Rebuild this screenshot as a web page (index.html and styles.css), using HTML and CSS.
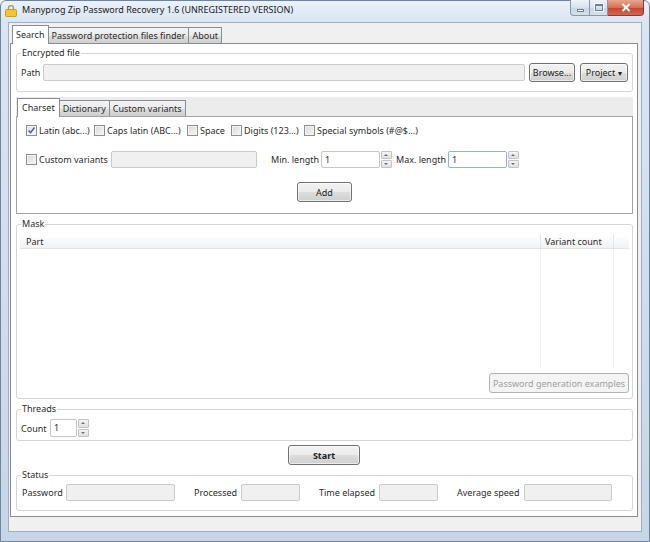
FILE: index.html
```html
<!DOCTYPE html>
<html>
<head>
<meta charset="utf-8">
<link rel="stylesheet" href="styles.css">
</head>
<body>
<div class="window">
  <div class="titlebar">
    <svg class="appicon" width="12" height="13" viewBox="0 0 12 13">
      <path d="M3.5 6V4.2a2.5 2.5 0 0 1 5 0V6" fill="none" stroke="#a89450" stroke-width="1.3"/>
      <rect x="0.5" y="5.5" width="11" height="7" rx="1" fill="#f1c534" stroke="#b98f1c" stroke-width="0.8"/>
    </svg>
    <span class="title">Manyprog Zip Password Recovery 1.6 (UNREGISTERED VERSION)</span>
    <div class="capbtns">
      <div class="capbtn cmin"><span class="minbar"></span></div>
      <div class="capbtn cmax"><span class="maxbox"></span></div>
      <div class="capbtn cclose">
        <svg width="10" height="9" viewBox="0 0 10 9"><path d="M1.5 1l7 7M8.5 1l-7 7" stroke="#fff" stroke-width="2"/></svg>
      </div>
    </div>
  </div>

  <div class="client">
    <div class="tabstrip">
      <div class="tab active">Search</div>
      <div class="tab">Password protection files finder</div>
      <div class="tab">About</div>
    </div>
    <div class="tabpanel">
      <div class="group g-file">
        <div class="gtitle">Encrypted file</div>
        <div class="row file-row">
          <span class="lbl">Path</span>
          <div class="field path"></div>
          <div class="btn browse">Browse...</div>
          <div class="btn project">Project <span class="caret">▾</span></div>
        </div>
      </div>

      <div class="subtabs">
        <div class="substrip">
          <div class="stab active">Charset</div>
          <div class="stab">Dictionary</div>
          <div class="stab">Custom variants</div>
        </div>
        <div class="subpanel">
          <div class="row cb-row">
            <div class="cbitem w-latin"><span class="cb checked"><svg width="9" height="9" viewBox="0 0 9 9"><path d="M1.5 4.5l2 2.2L7.5 1.5" fill="none" stroke="#4b5f95" stroke-width="1.5"/></svg></span>Latin (abc...)</div>
            <div class="cbitem w-caps"><span class="cb"></span>Caps latin (ABC...)</div>
            <div class="cbitem w-space"><span class="cb"></span>Space</div>
            <div class="cbitem w-digits"><span class="cb"></span>Digits (123...)</div>
            <div class="cbitem"><span class="cb"></span>Special symbols (#@$...)</div>
          </div>
          <div class="row cv-row">
            <div class="cbitem w-cv"><span class="cb"></span>Custom variants</div>
            <div class="field cvfield"></div>
            <span class="lbl minlbl">Min. length</span>
            <div class="spin"><span class="spinval">1</span><div class="spinbtns"><span class="sb up"></span><span class="sb dn"></span></div></div>
            <span class="lbl maxlbl">Max. length</span>
            <div class="spin focus"><span class="spinval">1</span><div class="spinbtns"><span class="sb up"></span><span class="sb dn"></span></div></div>
          </div>
          <div class="row add-row">
            <div class="btn add">Add</div>
          </div>
        </div>
      </div>

      <div class="group g-mask">
        <div class="gtitle">Mask</div>
        <div class="listview">
          <div class="lvhead">
            <div class="lvcol c-part">Part</div>
            <div class="lvcol c-count">Variant count</div>
            <div class="lvcol c-rest"></div>
          </div>
          <div class="lvbody">
            <div class="lvcell c-part"></div>
            <div class="lvcell c-count"></div>
            <div class="lvcell c-rest"></div>
          </div>
        </div>
        <div class="row ex-row">
          <div class="btn disabled">Password generation examples</div>
        </div>
      </div>

      <div class="group g-threads">
        <div class="gtitle">Threads</div>
        <div class="row th-row">
          <span class="lbl countlbl">Count</span>
          <div class="spin small"><span class="spinval">1</span><div class="spinbtns"><span class="sb up"></span><span class="sb dn"></span></div></div>
        </div>
      </div>

      <div class="row start-row">
        <div class="btn start">Start</div>
      </div>

      <div class="group g-status">
        <div class="gtitle">Status</div>
        <div class="row st-row">
          <span class="lbl l-pass">Password</span>
          <div class="field f-pass"></div>
          <span class="lbl l-proc">Processed</span>
          <div class="field f-proc"></div>
          <span class="lbl l-time">Time elapsed</span>
          <div class="field f-time"></div>
          <span class="lbl l-speed">Average speed</span>
          <div class="field f-speed"></div>
        </div>
      </div>
    </div>
  </div>
</div>
</body>
</html>
```

FILE: styles.css
```css
* { box-sizing: border-box; }
html, body { margin: 0; padding: 0; }
body {
  width: 650px; height: 542px; overflow: hidden;
  font-family: "Noto Sans", "Open Sans", sans-serif;
  font-size: 9px; color: #2b2b2b;
  background: #fff;
}
.window {
  width: 650px; height: 542px;
  display: flex; flex-direction: column;
  border: 1px solid #70849e;
  border-radius: 6px 6px 0 0;
  background: linear-gradient(#eaf1f9 0px, #d9e5f2 22px, #cfdceb 60%, #c6d5e8 100%);
}
.titlebar {
  height: 21px; flex: none;
  display: flex; align-items: flex-start;
  padding-left: 4px;
}
.appicon { margin-top: 3px; flex: none; }
.title {
  margin-left: 5px; margin-top: 3px;
  line-height: 12px; font-size: 9px; color: #1a1a1a;
  white-space: nowrap;
}
.capbtns { margin-left: auto; margin-right: 5px; display: flex; margin-top: -1px; }
.capbtn {
  height: 16px; border: 1px solid #8797ac; border-top: none;
  display: flex; align-items: center; justify-content: center;
}
.cmin { width: 19px; border-radius: 0 0 0 4px; border-right: none;
  background: linear-gradient(#eef3f8, #d9e2ec 50%, #c9d5e2 51%, #d8e1eb); }
.cmax { width: 19px;
  background: linear-gradient(#eef3f8, #d9e2ec 50%, #c9d5e2 51%, #d8e1eb); }
.cclose { width: 36px; border-radius: 0 0 4px 0; border-color: #8d3b2f; border-left: none;
  background: linear-gradient(#e9a48f, #d7705a 50%, #c5432d 51%, #d4664b); }
.minbar { width: 7px; height: 3px; background: #fff; border: 1px solid #6f7f94; margin-top: 5px; }
.maxbox { width: 8px; height: 7px; border: 1px solid #6f7f94; border-top-width: 2px; background: transparent; box-shadow: 0 0 0 1px rgba(255,255,255,.7); }

.client {
  margin: 0 7px; height: 510px; flex: none;
  border: 1px solid #9eafc5;
  background: #f0f0f0;
  padding: 2px 3px 14px 1px;
  display: flex; flex-direction: column;
}
.tabstrip {
  height: 18px; flex: none;
  display: flex; align-items: flex-end;
  padding-left: 2px;
}
.tab {
  height: 16px; padding: 0 3px;
  border: 1px solid #898c95; border-bottom: none; margin-left: -1px;
  background: linear-gradient(#f3f3f3, #ebebeb 50%, #dddddd 51%, #cfcfcf);
  line-height: 15px; white-space: nowrap;
}
.tab.active {
  height: 19px; margin-bottom: -1px; margin-left: 0;
  background: #fff; position: relative; z-index: 1;
  padding: 0 3px; line-height: 17px;
}
.tabpanel {
  width: 628px; height: 474px; flex: none;
  border: 1px solid #898c95; background: #fff;
  padding: 0 4px 0 5px;
  display: flex; flex-direction: column;
}

.row { display: flex; align-items: center; flex: none; }
.lbl { white-space: nowrap; }
.field { height: 17px; border: 1px solid #cacaca; background: #f0f0f0; border-radius: 2px; flex: none; }

.btn {
  height: 20px; border: 1px solid #707070; border-radius: 3px;
  background: linear-gradient(#f2f2f2, #ebebeb 50%, #dddddd 51%, #cfcfcf);
  display: flex; align-items: center; justify-content: center;
  white-space: nowrap; flex: none; color: #222;
  box-shadow: inset 0 0 0 1px rgba(255,255,255,.6);
}
.btn.disabled {
  border-color: #adb2b5; background: #f4f4f4; color: #a0a0a0; box-shadow: none;
  padding: 0 4px;
}

.group {
  border: 1px solid #d5d5d5; border-radius: 3px;
  padding: 0 3px 0 4px;
  display: flex; flex-direction: column; flex: none;
}
.gtitle {
  margin-top: -7px; line-height: 12px; height: 12px;
  align-self: flex-start; background: #fff; padding: 0 1px;
  white-space: nowrap;
}

/* Encrypted file */
.g-file { margin-top: 9px; height: 39px; }
.file-row { margin-top: 4px; height: 19px; padding-right: 1px; }
.path { flex: 1; margin-left: 3px; }
.browse { width: 46px; margin-left: 4px; height: 19px; }
.project { width: 48px; margin-left: 5px; height: 19px; }
.caret { font-size: 8px; margin-left: 3px; }

/* sub tabs */
.subtabs { margin-top: 5px; flex: none; display: flex; flex-direction: column; }
.substrip {
  height: 19px; background: #ececec; display: flex; align-items: flex-end;
  padding-left: 1px;
}
.stab {
  height: 16px; padding: 0 3px; border: 1px solid #898c95; border-bottom: none;
  margin-left: -1px;
  background: linear-gradient(#f3f3f3, #ebebeb 50%, #dddddd 51%, #cfcfcf);
  line-height: 15px; white-space: nowrap;
}
.stab.active {
  height: 19px; margin-left: 0; margin-bottom: -1px; background: #fff;
  position: relative; z-index: 1; padding: 0 4px; line-height: 17px;
}
.subpanel {
  height: 98px; border: 1px solid #a3a3a3; background: #fff;
  padding: 6px 0 0 9px;
  display: flex; flex-direction: column;
}
.cb-row { height: 14px; }
.cbitem { display: flex; align-items: center; white-space: nowrap; flex: none; }
.cb {
  width: 11px; height: 11px; border: 1px solid #8e8f8f; flex: none;
  background: linear-gradient(135deg, #d8d8d8, #f7f7f7);
  box-shadow: inset 0 0 0 1px #f4f4f4;
  margin-right: 2px;
  display: flex; align-items: center; justify-content: center;
}
.cb.checked { background: linear-gradient(135deg, #e0e0e0, #fafafa); }
.w-latin { width: 68px; }
.w-caps { width: 93px; }
.w-space { width: 44px; }
.w-digits { width: 73px; }
.cv-row { margin-top: 14px; height: 17px; }
.w-cv { width: 85px; }
.cvfield { width: 146px; }
.minlbl { width: 50px; margin-left: 14px; }
.maxlbl { width: 52px; margin-left: 4px; }
.spin { width: 71px; height: 17px; display: flex; flex: none; }
.spinval {
  flex: 1; border: 1px solid #c2c6cc; border-radius: 2px; background: #fff;
  padding-left: 3px; line-height: 15px;
}
.spin.focus .spinval { border-color: #8db2e3; }
.spinbtns { width: 11px; margin-left: 1px; display: flex; flex-direction: column; gap: 1px; }
.sb {
  flex: 1; border: 1px solid #c3c3c3; border-radius: 1px;
  background: linear-gradient(#f4f4f4, #e0e0e0);
  position: relative;
}
.sb::after {
  content: ""; position: absolute; left: 2px; top: 2px;
  border-left: 2px solid transparent; border-right: 2px solid transparent;
}
.sb.up::after { border-bottom: 2px solid #6d6d6d; }
.sb.dn::after { border-top: 2px solid #6d6d6d; }
.add-row { margin-top: 14px; justify-content: center; padding-right: 9px; }
.add { width: 55px; }

/* Mask */
.g-mask { margin-top: 10px; height: 175px; padding: 0 3px 0 3px; }
.g-mask .gtitle { margin-left: 1px; }
.listview { margin-top: 5px; height: 133px; display: flex; flex-direction: column; }
.lvhead {
  height: 14px; display: flex;
  background: linear-gradient(#fff, #f7f8f9 50%, #f1f2f4);
  border-bottom: 1px solid #e3e4e6;
}
.lvcol { line-height: 13px; border-right: 1px solid #e6e6e6; white-space: nowrap; }
.c-part { width: 521px; padding-left: 6px; }
.c-count { width: 73px; padding-left: 4px; }
.c-rest { flex: 1; border-right: none; }
.lvbody { flex: 1; display: flex; }
.lvcell { border-right: 1px solid #f0f0f0; }
.lvcell.c-rest { border-right: none; }
.ex-row { margin-top: 5px; justify-content: flex-end; }
.ex-row .btn { width: 140px; height: 20px; }

/* Threads */
.g-threads { margin-top: 10px; height: 32px; }
.th-row { margin-top: 4px; height: 18px; }
.countlbl { width: 29px; }
.spin.small { width: 39px; height: 18px; }
.spin.small .spinval { line-height: 16px; }

/* Start */
.start-row { margin-top: 4px; justify-content: center; padding-right: 1px; }
.start { width: 72px; font-weight: bold; }

/* Status */
.g-status { margin-top: 10px; height: 36px; padding-left: 5px; }
.g-status .gtitle { margin-left: -1px; }
.st-row { margin-top: 3px; height: 17px; }
.l-pass { width: 44px; }
.f-pass { width: 109px; }
.l-proc { width: 47px; margin-left: 19px; }
.f-proc { width: 59px; }
.l-time { width: 60px; margin-left: 19px; }
.f-time { width: 59px; }
.l-speed { width: 67px; margin-left: 19px; }
.f-speed { width: 88px; }
```
